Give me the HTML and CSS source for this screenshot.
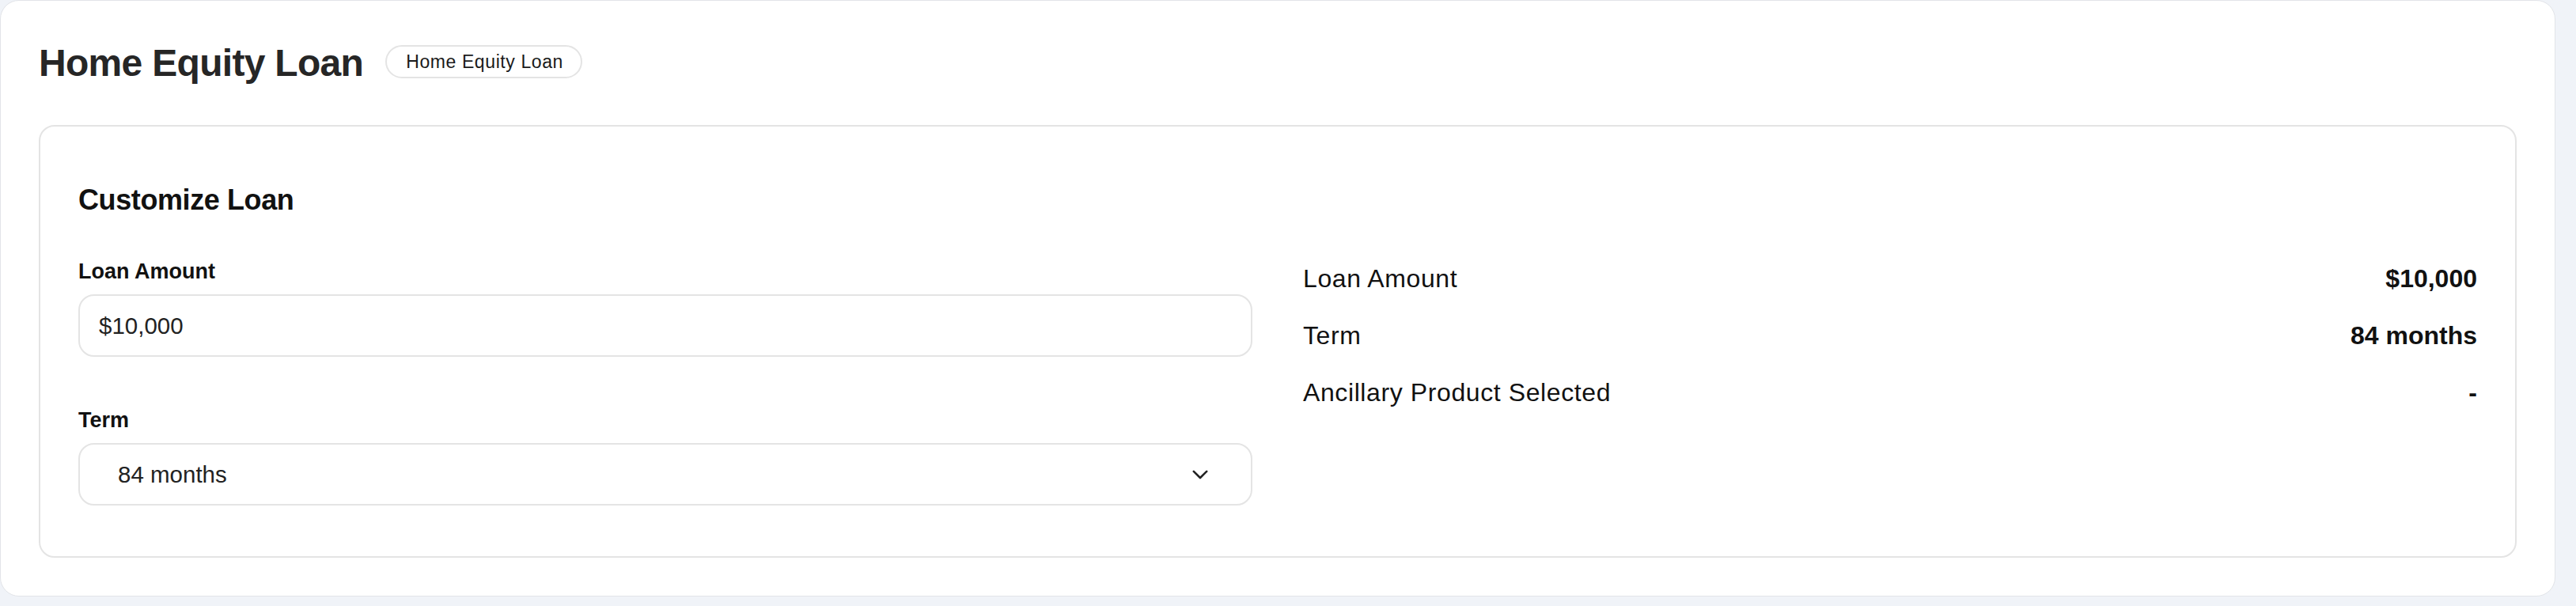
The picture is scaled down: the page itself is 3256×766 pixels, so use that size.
FILE: index.html
```html
<!DOCTYPE html>
<html lang="en">
<head>
  <meta charset="UTF-8">
  <title>Home Equity Loan</title>
  <meta name="viewport" content="width=device-width, initial-scale=1">
  <link rel="stylesheet" href="styles.css">
</head>
<body>

<main class="loan-card">

  <header class="loan-head">
    <h1 class="loan-title">Home Equity Loan</h1>
    <span class="tag">Home Equity Loan</span>
  </header>

  <section class="panel" aria-labelledby="panel-title">
    <h2 class="panel-title" id="panel-title">Customize Loan</h2>

    <div class="panel-grid">
      <div class="form">
        <div class="field">
          <label class="field-label" for="amount">Loan Amount</label>
          <input class="field-input" id="amount" type="text" value="$10,000">
        </div>
        <div class="field">
          <span class="field-label" id="term-label">Term</span>
          <div class="field-select" role="combobox" aria-labelledby="term-label" aria-expanded="false" tabindex="0">
            <span>84 months</span>
            <svg class="chevron" width="20" height="12" viewBox="0 0 20 12" aria-hidden="true">
              <path d="M1.8 1.8 L10 10 L18.2 1.8" fill="none" stroke="currentColor" stroke-width="2.6" stroke-linecap="round" stroke-linejoin="round"/>
            </svg>
          </div>
        </div>
      </div>

      <dl class="summary">
        <div class="summary-row">
          <dt>Loan Amount</dt>
          <dd>$10,000</dd>
        </div>
        <div class="summary-row">
          <dt>Term</dt>
          <dd>84 months</dd>
        </div>
        <div class="summary-row">
          <dt>Ancillary Product Selected</dt>
          <dd>-</dd>
        </div>
      </dl>
    </div>
  </section>

</main>

</body>
</html>
```

FILE: styles.css
```css
:root {
  --page-bg:     #F0F3F8;
  --card-bg:     #FFFFFF;
  --card-border: #E2E4E8;
  --line:        #E4E4E4;
  --text:        #111111;
  --text-soft:   #262626;
}

* { box-sizing: border-box; }

body {
  margin: 0;
  background: var(--page-bg);
  color: var(--text);
  font-family: 'Liberation Sans', Arial, sans-serif;
}

.loan-card {
  margin-right: 26px;
  padding: 48px;
  background: var(--card-bg);
  border: 1px solid var(--card-border);
  border-radius: 24px;
}

.loan-head {
  display: flex; align-items: center;
  gap: 28px;
  margin-bottom: 47px;
}

.loan-title {
  margin: 0;
  font-size: 48px; font-weight: 700;
  line-height: 62px;
  letter-spacing: -0.7px;
  color: var(--text-soft);
}

.tag {
  padding: 0 22px 0 24px;
  border: 2px solid var(--line);
  border-radius: 999px;
  font-size: 23px; line-height: 38px;
  letter-spacing: 0.6px;
  color: #1a1a1a;
  margin-top: -4px;
}

.panel {
  padding: 64px 48px;
  border: 2px solid var(--line);
  border-radius: 20px;
}

.panel-title {
  margin: 0 0 40px;
  font-size: 36px; font-weight: 700;
  line-height: 58px;
  letter-spacing: -0.4px;
}

.panel-grid {
  display: grid;
  grid-template-columns: 1fr 1fr;
  gap: 64px;
}

.field { display: flex; flex-direction: column; }
.field + .field { margin-top: 59px; }

.field-label {
  margin-bottom: 8px;
  font-size: 27px; font-weight: 700;
  line-height: 42px;
}

.field-input,
.field-select {
  height: 79px;
  border: 2px solid var(--line);
  border-radius: 20px;
  background: #FFF;
  color: #222;
  font-family: inherit;
  font-size: 29.5px;
}

.field-input {
  width: 100%;
  padding: 0 24px;
  outline: none;
}

.field-select {
  display: flex; align-items: center;
  justify-content: space-between;
  padding: 0 54px 0 48px;
  cursor: pointer;
}

.chevron { color: #222; }

.summary {
  margin: 0;
  display: flex; flex-direction: column;
  gap: 12px;
}

.summary-row {
  display: flex; align-items: center;
  justify-content: space-between;
  font-size: 32px; line-height: 60px;
}

.summary-row dt { letter-spacing: 0.6px; }

.summary-row dd {
  margin: 0;
  font-weight: 700;
}
```
